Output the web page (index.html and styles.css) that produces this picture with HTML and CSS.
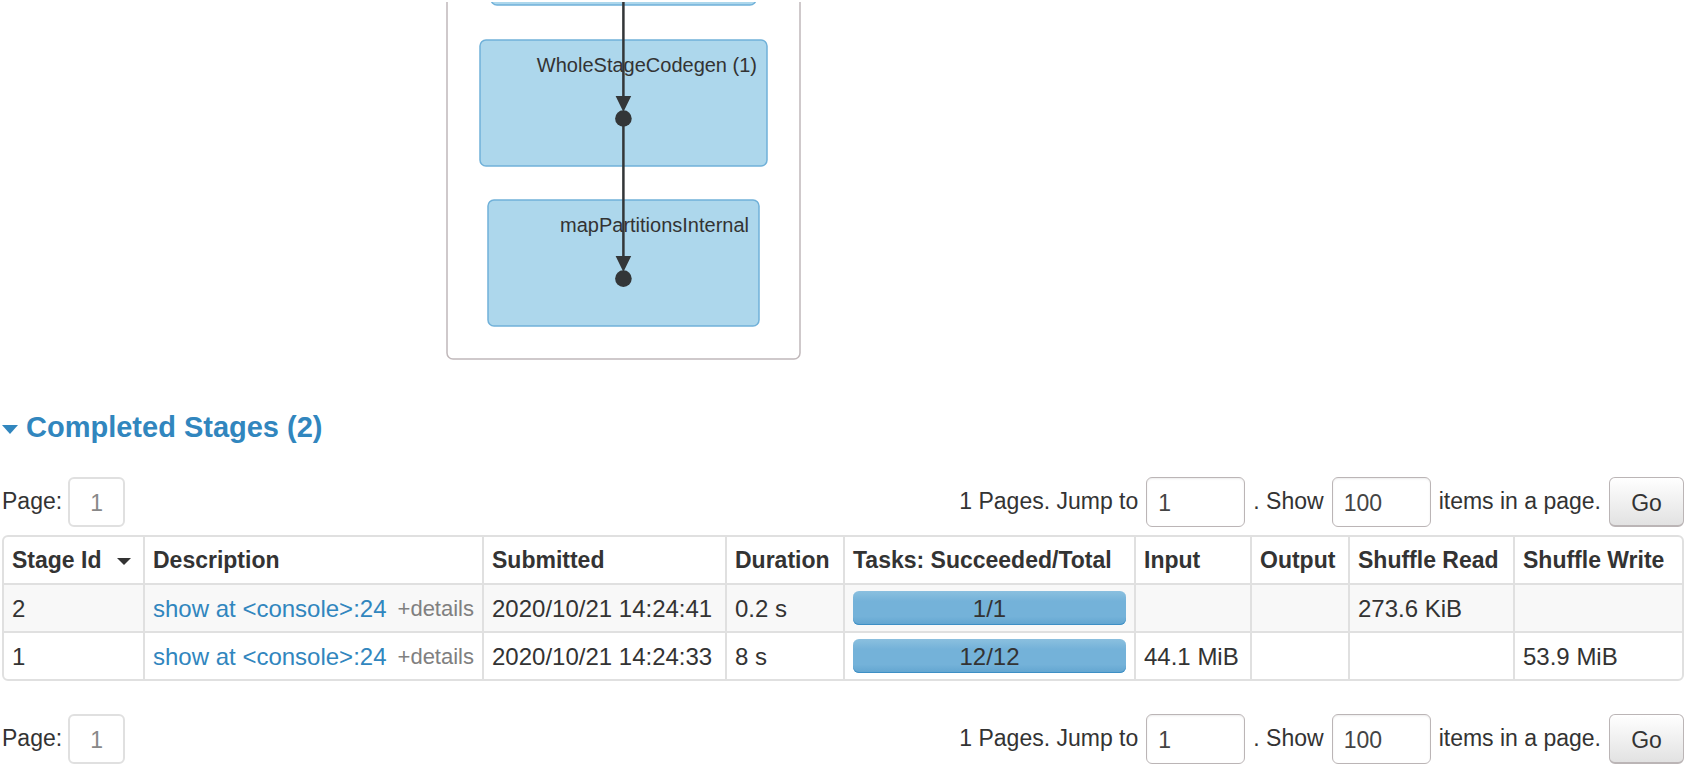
FILE: index.html
```html
<!DOCTYPE html>
<html lang="en">
<head>
<meta charset="utf-8">
<title>Completed Stages</title>
<link rel="stylesheet" href="styles.css">
</head>
<body>
<main class="page">
  <div class="dag">
    <svg class="dag-graph" width="356" height="362" viewBox="446 0 356 362" role="img" aria-label="Stage graph">
      <defs><clipPath id="viewport"><rect x="446" y="2" width="356" height="360"/></clipPath></defs>
      <g clip-path="url(#viewport)">
        <rect class="stage" x="447" y="-20" width="353" height="379" rx="6"/>
        <rect class="cluster" x="491" y="-60" width="265" height="65" rx="6"/>
        <rect class="cluster" x="480" y="40" width="287" height="126" rx="6"/>
        <rect class="cluster" x="488" y="200" width="271" height="126" rx="6"/>
        <text class="dag-label" x="757" y="72" text-anchor="end">WholeStageCodegen (1)</text>
        <text class="dag-label" x="749" y="232" text-anchor="end">mapPartitionsInternal</text>
        <path class="edge" d="M623.4 0V98M623.4 118V259"/>
        <path class="node" d="M615.6 96h15.6l-7.8 16zM615.6 256h15.6l-7.8 16z"/>
        <circle class="node" cx="623.4" cy="118.5" r="8.3"/>
        <circle class="node" cx="623.4" cy="278.6" r="8.3"/>
      </g>
    </svg>
  </div>

  <h4 class="section-title"><a class="section-link" href="#stages"><span class="caret caret-large"></span>Completed Stages (2)</a></h4>

  <form class="pager" id="top">
    <div class="pager-group pager-pages"><span class="pager-text">Page:</span><a class="page-number" href="#top">1</a></div>
    <div class="pager-group">
      <label class="pager-text" for="jump-top">1 Pages. Jump to</label>
      <input class="field" id="jump-top" type="text" value="1">
      <label class="pager-text" for="size-top">. Show</label>
      <input class="field" id="size-top" type="text" value="100">
      <span class="pager-text">items in a page.</span>
      <button class="go" type="button">Go</button>
    </div>
  </form>

  <table class="stages" id="stages">
    <colgroup><col class="c-id"><col class="c-desc"><col class="c-sub"><col class="c-dur"><col class="c-tasks"><col class="c-in"><col class="c-out"><col class="c-read"><col class="c-write"></colgroup>
    <thead>
      <tr><th>Stage Id<span class="caret caret-sort"></span></th><th>Description</th><th>Submitted</th><th>Duration</th><th>Tasks: Succeeded/Total</th><th>Input</th><th>Output</th><th>Shuffle Read</th><th>Shuffle Write</th></tr>
    </thead>
    <tbody>
      <tr><td>2</td><td><div class="description"><a class="link" href="#stages">show at &lt;console&gt;:24</a><span class="details">+details</span></div></td><td>2020/10/21 14:24:41</td><td>0.2 s</td><td class="progress-cell"><div class="progress">1/1</div></td><td></td><td></td><td>273.6 KiB</td><td></td></tr>
      <tr><td>1</td><td><div class="description"><a class="link" href="#stages">show at &lt;console&gt;:24</a><span class="details">+details</span></div></td><td>2020/10/21 14:24:33</td><td>8 s</td><td class="progress-cell"><div class="progress">12/12</div></td><td>44.1 MiB</td><td></td><td></td><td>53.9 MiB</td></tr>
    </tbody>
  </table>

  <form class="pager" id="bottom">
    <div class="pager-group pager-pages"><span class="pager-text">Page:</span><a class="page-number" href="#bottom">1</a></div>
    <div class="pager-group">
      <label class="pager-text" for="jump-bottom">1 Pages. Jump to</label>
      <input class="field" id="jump-bottom" type="text" value="1">
      <label class="pager-text" for="size-bottom">. Show</label>
      <input class="field" id="size-bottom" type="text" value="100">
      <span class="pager-text">items in a page.</span>
      <button class="go" type="button">Go</button>
    </div>
  </form>
</main>
</body>
</html>
```
FILE: styles.css
```css
* { box-sizing: border-box; }
body {
  margin: 0;
  background: #fff;
  color: #333;
  font-family: "Liberation Sans", Arial, sans-serif;
  font-size: 24px;
  line-height: 30px;
}
.page { padding: 0 5px 0 2px; }
a { text-decoration: none; }

.dag { padding-left: 444px; }
.dag-graph { display: block; }
.stage { fill: #fff; stroke: #c0b8ba; stroke-width: 1.5; }
.cluster { fill: #add7ec; stroke: #70b1d9; stroke-width: 1.5; }
.edge { fill: none; stroke: #333638; stroke-width: 2.5; }
.node { fill: #333638; }
.dag-label { font-size: 20px; fill: #333; }

.section-title { margin: 45px 0 30px; font-size: 29px; line-height: 40px; }
.section-link { display: flex; align-items: center; gap: 8px; color: #3186be; }
.caret { display: inline-block; border: solid transparent; border-bottom: 0; }
.caret-large { border-width: 9px 8px 0; border-top-color: #3186be; margin-top: 4px; }
.caret-sort { border-width: 7px 7px 0; border-top-color: #333; margin-left: 16px; vertical-align: 3px; }

.pager { display: flex; justify-content: space-between; margin: 0; font-size: 23px; }
.pager-group { display: flex; align-items: center; gap: 8px; white-space: nowrap; }
.pager-pages { gap: 6px; }
.pager-text { padding-bottom: 2px; }
.page-number {
  width: 57px;
  height: 50px;
  border: 2px solid #e0e0e0;
  border-radius: 6px;
  color: #888;
  line-height: 48px;
  text-align: center;
}
.field {
  width: 99px;
  height: 50px;
  margin: 0;
  padding: 2px 11px 0;
  border: 1px solid #bbb5b6;
  border-radius: 6px;
  background: #fff;
  box-shadow: inset 0 1px 2px #ececec;
  color: #444;
  font: inherit;
}
.go {
  width: 75px;
  height: 50px;
  padding: 2px 0 0;
  border: 1px solid #bbb5b6;
  border-bottom-width: 2px;
  border-radius: 6px;
  background: linear-gradient(#fff, #e2e2e2);
  color: #333;
  font: inherit;
}

.stages {
  width: 100%;
  margin: 8px 0 33px;
  table-layout: fixed;
  border: 2px solid #e0e0e0;
  border-radius: 6px;
  border-collapse: separate;
  border-spacing: 0;
}
.c-id { width: 139px; }
.c-desc { width: 339px; }
.c-sub { width: 243px; }
.c-dur { width: 118px; }
.c-tasks { width: 291px; }
.c-in { width: 116px; }
.c-out { width: 98px; }
.c-read { width: 165px; }
.c-write { width: 169px; }
th, td {
  padding: 8px 0 8px 8px;
  border-left: 2px solid #e0e0e0;
  text-align: left;
  white-space: nowrap;
}
th { font-size: 23px; }
td { padding-top: 9px; padding-bottom: 7px; border-top: 2px solid #e0e0e0; }
th:first-child, td:first-child { border-left: 0; }
tbody tr:nth-child(odd) td { background: #f8f8f8; }
.description { display: flex; justify-content: space-between; padding-right: 8px; }
.link { color: #3186be; }
.details { color: #808080; font-size: 22px; }
.progress-cell { padding: 6px 8px; }
.progress {
  padding-top: 2px;
  border-radius: 6px;
  background: linear-gradient(#8bc0df, #74b2d9 30%, #74b2d9 75%, #62a5d0);
  box-shadow: inset 0 -1px 0 #3d8fc5;
  line-height: 32px;
  text-align: center;
}
```
